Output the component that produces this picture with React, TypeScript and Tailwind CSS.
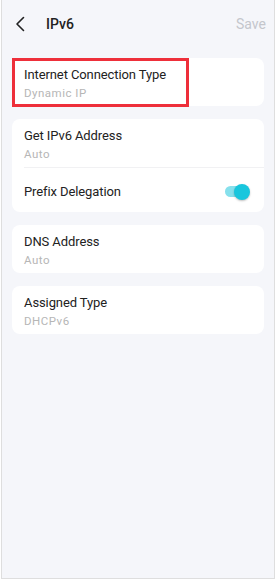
import React from "react";

const font = { fontFamily: "Roboto, 'Noto Sans', sans-serif" };

const Row = ({ title, value }: { title: string; value: string }) => (
  <div className="px-[12px] pt-[8px] pb-[5px]">
    <div className="text-[13px] leading-[18px] tracking-[-0.1px] text-[#222]">{title}</div>
    <div className="text-[11.5px] leading-[15px] mt-[2px] tracking-[0.5px] text-[#b6b6b6]">{value}</div>
  </div>
);

export default function App() {
  return (
    <div className="w-[276px] h-[580px] bg-white" style={font}>
      <div className="ml-[1px] w-[274px] h-[579px] bg-[#f5f6fa] border-x border-b border-[#dedede] relative">
        {/* header */}
        <header className="flex items-center justify-between h-[48px] pl-[12px] pr-[8px]">
          <div className="flex items-center gap-[20px]">
            <svg width="12" height="16" viewBox="0 0 12 16" fill="none">
              <path d="M9.5 1.5L3 8L9.5 14.5" stroke="#222" strokeWidth="1.6" strokeLinecap="round" strokeLinejoin="round" />
            </svg>
            <span className="text-[14px] font-medium text-[#222]">IPv6</span>
          </div>
          <span className="text-[14px] text-[#c4c6cc]">Save</span>
        </header>

        <div className="flex flex-col gap-[13px] px-[10px] pt-[10px]">
          <div className="bg-white rounded-[8px]">
            <Row title="Internet Connection Type" value="Dynamic IP" />
          </div>

          <div className="bg-white rounded-[8px]">
            <Row title="Get IPv6 Address" value="Auto" />
            <div className="ml-[12px] border-t border-[#f1f1f3]" />
            <div className="flex items-center justify-between pl-[12px] pr-[14px] pt-[3px] h-[44px]">
              <span className="text-[13px] tracking-[-0.1px] text-[#222]">Prefix Delegation</span>
              <div className="relative w-[25px] h-[16px] flex items-center">
                <div className="w-[22px] h-[11px] rounded-full bg-[#86e0ec]" />
                <div className="absolute right-0 top-0 w-[16px] h-[16px] rounded-full bg-[#18c6dd] shadow-[0_1px_2px_rgba(0,0,0,0.25)]" />
              </div>
            </div>
          </div>

          <div className="bg-white rounded-[8px]">
            <Row title="DNS Address" value="Auto" />
          </div>

          <div className="bg-white rounded-[8px]">
            <Row title="Assigned Type" value="DHCPv6" />
          </div>
        </div>

        {/* highlight annotation */}
        <div className="absolute left-[10px] top-[58px] w-[177px] h-[49px] border-[3px] border-[#ee2f3a]" />
      </div>
    </div>
  );
}
